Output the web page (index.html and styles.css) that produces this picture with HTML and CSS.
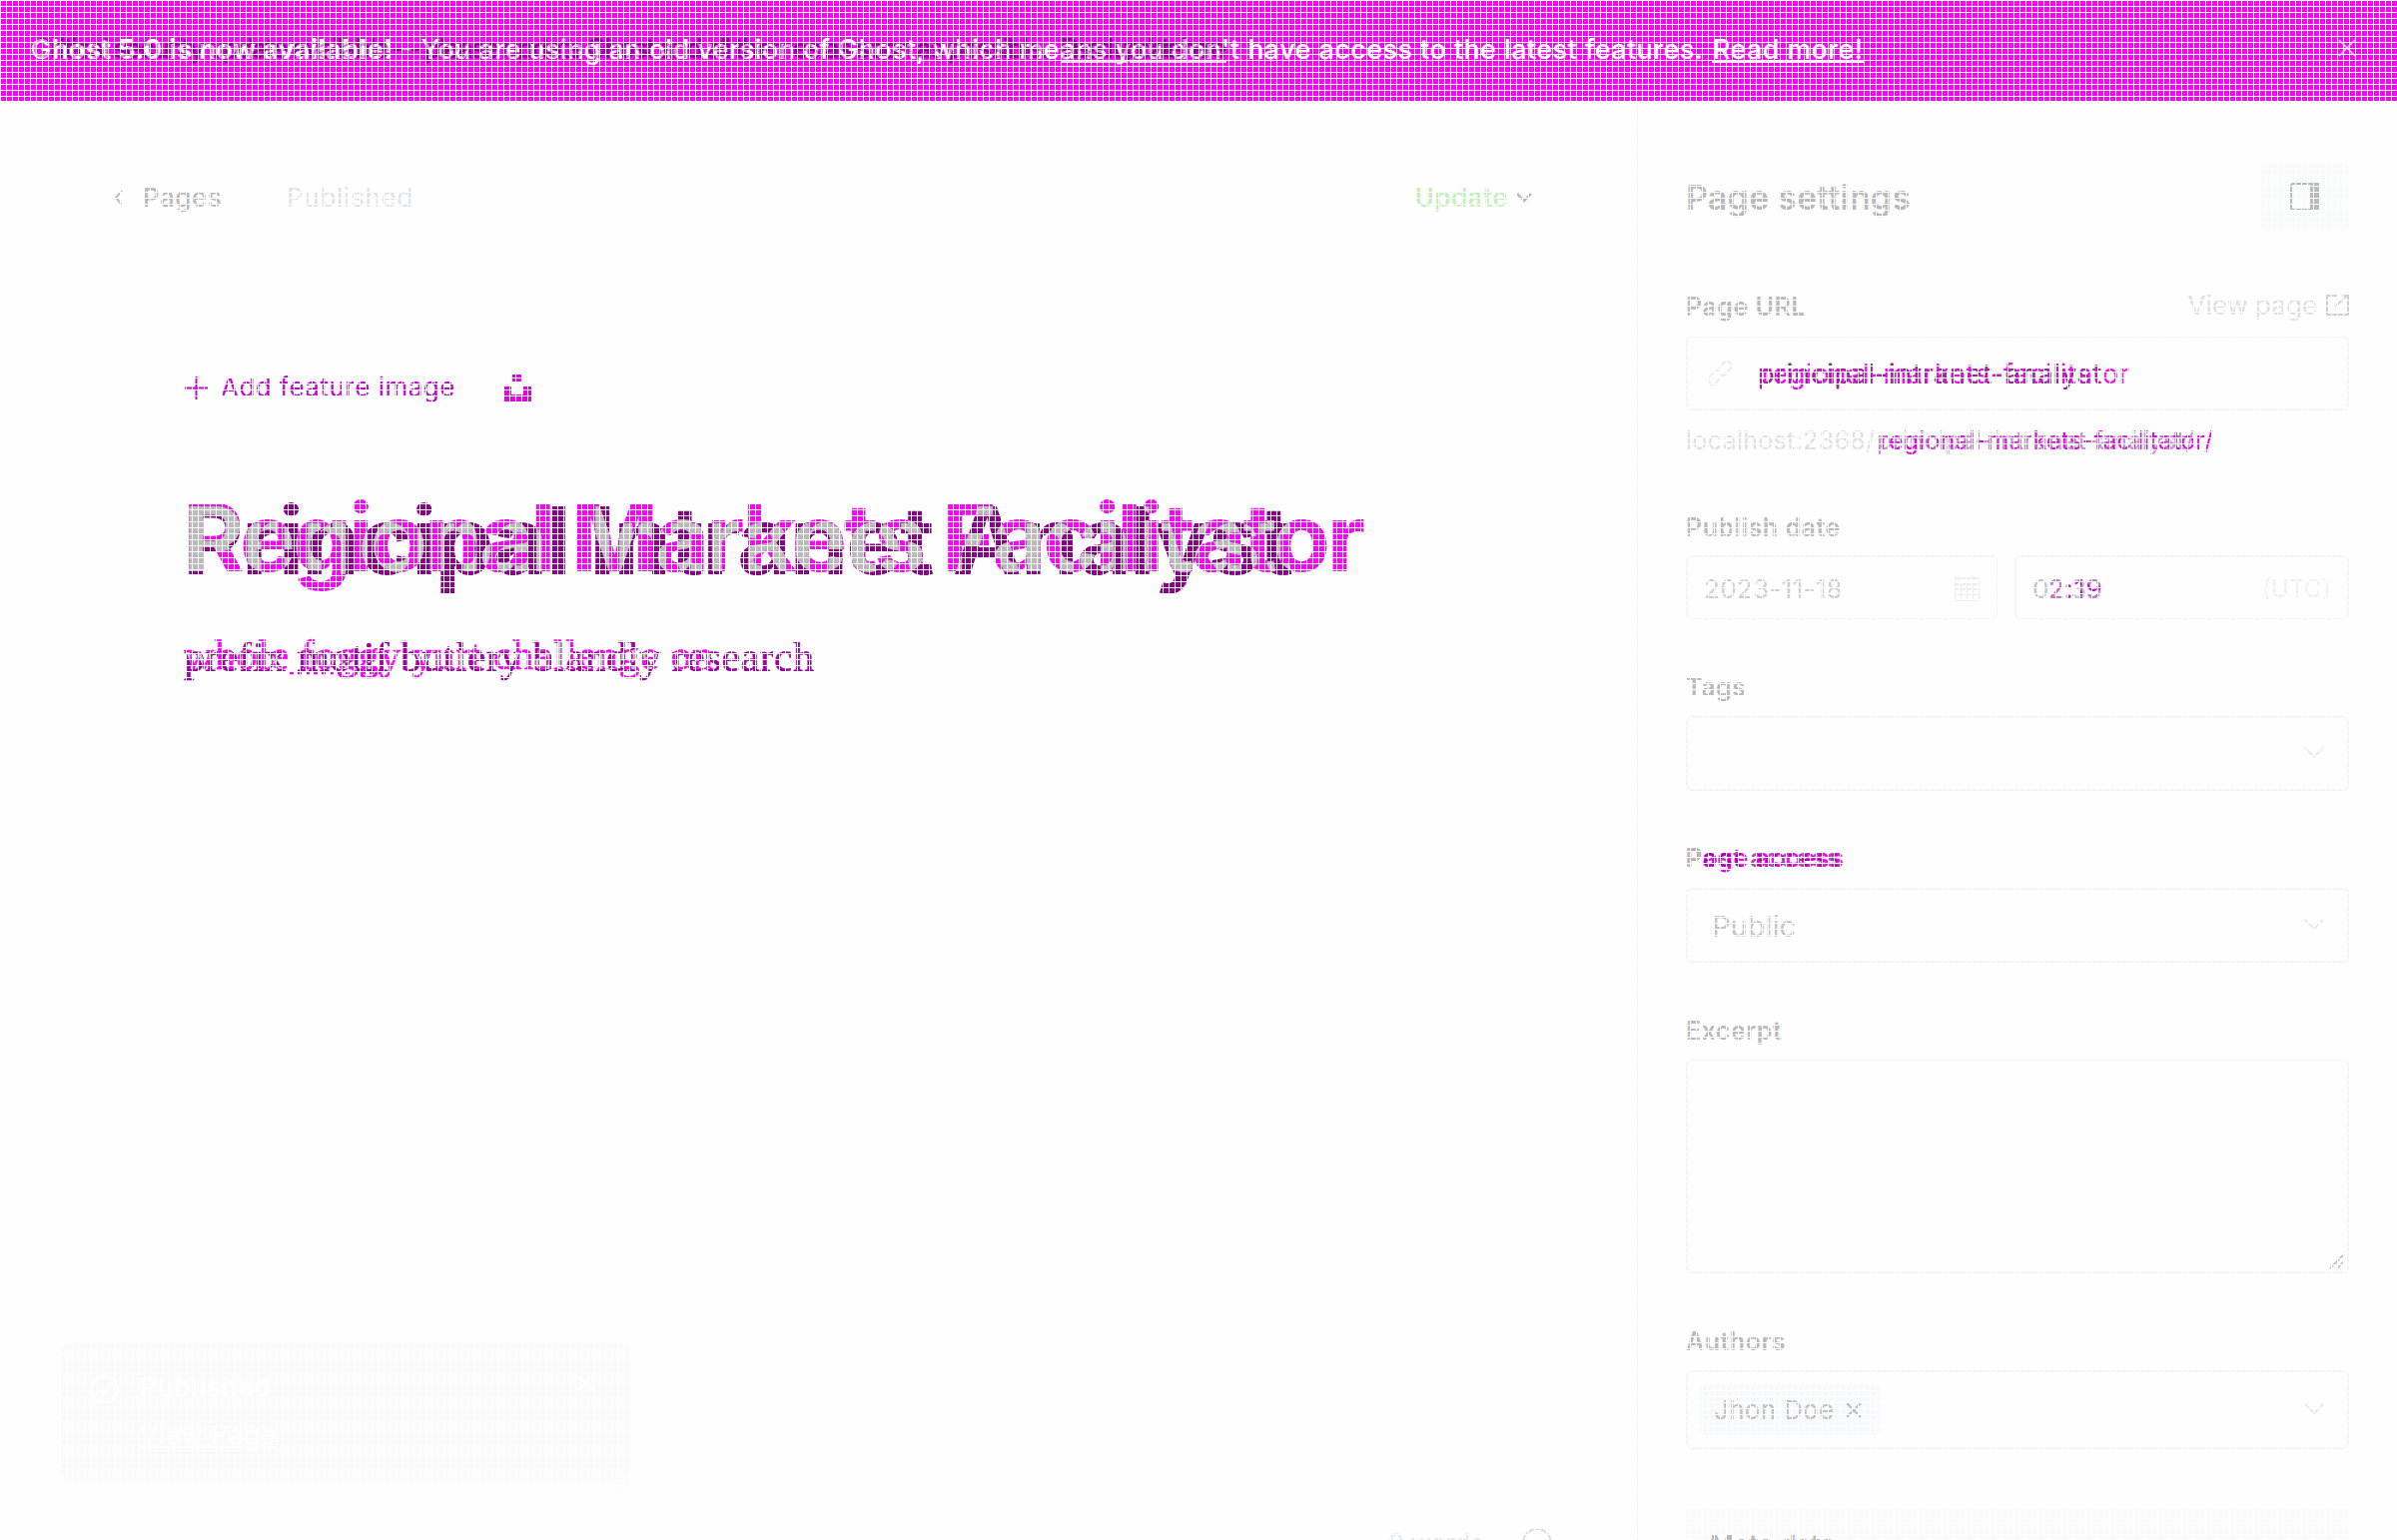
FILE: index.html
```html
<!DOCTYPE html>
<html lang="en">
<head>
<meta charset="utf-8">
<title>Page editor</title>
<link rel="stylesheet" href="styles.css">
</head>
<body>
<header class="banner">
  <svg class="banner-text" width="2200" height="101">
    <defs>
      <g id="b-old">
        <text x="32" y="58" textLength="1018">Critical security update available — please update Ghost and all themes as soon as possible.</text>
        <text x="1062" y="58" textLength="166">Read update here</text>
      </g>
    </defs>
    <use href="#b-old" class="dark"/>
    <rect x="1062" y="60" width="166" height="3" fill="#e2d4e2"/>
    <g class="light">
      <text x="31" y="59" textLength="362" font-weight="700">Ghost 5.0 is now available!</text>
      <text x="401" y="59" textLength="1304">- You are using an old version of Ghost, which means you don't have access to the latest features.</text>
      <text x="1715" y="59" textLength="150">Read more!</text>
    </g>
    <use href="#b-old" class="dark veil"/>
    <rect x="1714" y="61" width="152" height="2" fill="#fff"/>
  </svg>
  <svg class="banner-close" width="18" height="18" viewBox="0 0 18 18"><path d="M1 1L17 17M17 1L1 17"/></svg>
</header>
<div class="layout">
  <main class="editor">
    <div class="toolbar">
      <svg class="back" width="10" height="16" viewBox="0 0 10 16"><path d="M8 1L2 8L8 15"/></svg>
      <span class="crumb">Pages</span>
      <span class="status">Published</span>
      <span class="update">Update</span>
      <svg class="update-arrow" width="16" height="10" viewBox="0 0 16 10"><path d="M1 1L8 8L15 1"/></svg>
    </div>
    <div class="feature">
      <svg width="23" height="23" viewBox="0 0 23 23"><path d="M11.500 0V23M0 11.500H23" stroke="#c800d8" stroke-width="2"/></svg>
      <span class="feature-text">Add feature image</span>
      <svg width="27" height="27" viewBox="0 0 27 27"><path d="M8 0H18V7H8ZM0 12H7V20H19V12H27V27H0Z" fill="#e000e6"/></svg>
    </div>
    <svg class="title" width="1260" height="120">
      <defs>
        <text id="t-old" x="0" y="83" textLength="1112">Principal Intranet Analyst</text>
        <text id="t-new" x="0" y="80" textLength="1184">Regional Markets Facilitator</text>
        <clipPath id="t-clip"><use href="#t-new"/></clipPath>
      </defs>
      <use href="#t-old" fill="#8b008b"/>
      <use href="#t-new" fill="#f0f"/>
      <g clip-path="url(#t-clip)"><use href="#t-old" fill="#bababa"/></g>
    </svg>
    <svg class="subtitle" width="700" height="64">
      <defs>
        <text id="s-old" x="0" y="42" textLength="631">prefix motif butlery blandly research</text>
        <text id="s-new" x="0" y="40" textLength="530">whole foggy yurt challenge on</text>
        <clipPath id="s-clip"><use href="#s-new"/></clipPath>
      </defs>
      <use href="#s-new" fill="#f0f" stroke="#f0f"/>
      <use href="#s-old" fill="#a000a4" stroke="#a000a4"/>
      <g clip-path="url(#s-clip)"><use href="#s-old" fill="#c8c8c8"/></g>
      <path d="M106 44H202" stroke="#f0f" stroke-width="2.500" stroke-dasharray="4 4"/>
    </svg>
    <div class="toast">
      <svg width="30" height="30" viewBox="0 0 30 30"><circle cx="15" cy="15" r="13"/><path d="M9 15L14 20L22 9"/></svg>
      <div class="toast-body"><strong>Published</strong><span>View Page</span></div>
      <svg width="18" height="18" viewBox="0 0 18 18"><path d="M2 2L16 16M16 2L2 16"/></svg>
    </div>
    <div class="footer">
      <span>0 words</span>
      <svg width="30" height="30" viewBox="0 0 30 30"><circle cx="15" cy="15" r="14"/></svg>
    </div>
  </main>
  <aside class="settings">
    <div class="settings-head">
      <h2>Page settings</h2>
      <div class="toggle"><svg width="30" height="28" viewBox="0 0 30 28"><rect x="1" y="1" width="28" height="26" rx="2" fill="none" stroke="#bababa" stroke-width="2"/><path d="M20 1H29V27H20Z" fill="#bababa"/></svg></div>
    </div>
    <div class="row url-label">
      <span class="label">Page URL</span>
      <span class="view">View page <svg width="23" height="21" viewBox="0 0 23 21"><path d="M12 1H1V20H22V1H16M9 12L21 1"/></svg></span>
    </div>
    <div class="box url-box">
      <svg class="link" width="26" height="27" viewBox="0 0 26 27"><path d="M12 9L17 3Q20 0 23 3Q26 6 23 10L18 15Q15 17 13 15M13 18L9 24Q6 27 3 24Q0 20 3 17L8 12Q11 10 13 12"/></svg>
      <svg class="slug" width="400" height="48">
        <text x="0" y="34" textLength="344" fill="#a000a4">principal-intranet-analyst</text>
        <text x="4" y="34" textLength="368" fill="#f0f">regional-markets-facilitator</text>
        <text x="0" y="34" textLength="344" fill="#8b408b" opacity=".6">principal-intranet-analyst</text>
      </svg>
    </div>
    <svg class="hint" width="664" height="32">
      <text x="0" y="26" textLength="189" fill="#dcdfe5">localhost:2368/</text>
      <text x="194" y="26" textLength="334" fill="#e800ec">regional-markets-facilitator/</text>
      <text x="191" y="26" textLength="318" fill="#b878c0" opacity=".8">principal-intranet-analyst/</text>
    </svg>
    <div class="label date-label">Publish date</div>
    <div class="row">
      <div class="box date"><span>2023-11-18</span><svg width="26" height="26" viewBox="0 0 26 26"><path d="M1 3H25V25H1ZM1 9H25M1 14H25M1 19H25M7 9V25M13 9V25M19 9V25M6 0V5M20 0V5"/></svg></div>
      <div class="box time"><svg width="90" height="32"><text x="0" y="26" textLength="70" fill="#c4c7ca">02:33</text><text x="16" y="26" textLength="54" fill="#c800d0">2:19</text><text x="0" y="26" textLength="70" fill="#c4c7ca" opacity=".6">02:33</text></svg><span class="utc">(UTC)</span></div>
    </div>
    <div class="label group">Tags</div>
    <div class="box select"><svg class="chev" width="20" height="12" viewBox="0 0 20 12"><path d="M1 1L10 10L19 1"/></svg></div>
    <svg class="access group" width="300" height="32">
      <text x="0" y="25" textLength="158" fill="#f0f">Page access</text>
      <text x="0" y="25" textLength="154" fill="#8b008b" opacity=".7">Post access</text>
      <text x="0" y="25" fill="#bababa">P</text>
    </svg>
    <div class="box select"><span class="public">Public</span><svg class="chev" width="20" height="12" viewBox="0 0 20 12"><path d="M1 1L10 10L19 1"/></svg></div>
    <div class="label group">Excerpt</div>
    <div class="box area"><svg width="16" height="16" viewBox="0 0 16 16"><path d="M1 15L15 1M8 15L15 8" stroke="#c4c4c4" stroke-width="2"/></svg></div>
    <div class="label group">Authors</div>
    <div class="box authors">
      <span class="chip">Jhon Doe <svg width="16" height="16" viewBox="0 0 16 16"><path d="M1 1L15 15M15 1L1 15" stroke="#bababa" stroke-width="2"/></svg></span>
      <svg class="chev" width="20" height="12" viewBox="0 0 20 12"><path d="M1 1L10 10L19 1"/></svg>
    </div>
    <div class="meta">Meta data</div>
  </aside>
</div>
<div class="mesh"></div>
</body>
</html>
```
FILE: styles.css
```css
* { box-sizing: border-box; }
body {
  margin: 0;
  width: 2400px;
  height: 1542px;
  overflow: hidden;
  background: #fefefe;
  font-family: Inter, "Liberation Sans", sans-serif;
  font-size: 26px;
}
svg { display: block; flex: none; fill: none; }
/* fine white mesh drawn over the whole page */
.mesh {
  position: absolute;
  inset: 0;
  background:
    repeating-linear-gradient(90deg, #fefefe 0 1px, transparent 1px 6px),
    repeating-linear-gradient(180deg, #fefefe 0 1px, transparent 1px 6px);
}
.banner {
  height: 101px;
  display: flex;
  align-items: center;
  justify-content: space-between;
  padding-right: 41px;
  background: #f0f;
}
.banner-text { font-size: 27px; }
.banner-text .dark { fill: #96009a; font-weight: 500; }
.banner-text .veil { opacity: .45; }
.banner-text .light { fill: #fff; font-weight: 500; }
.banner-close { stroke: #ffc8ff; stroke-width: 1.5; margin-bottom: 5px; }
.layout { display: flex; height: 1441px; }
.editor { width: 1639px; display: flex; flex-direction: column; }
.toolbar {
  display: flex;
  align-items: center;
  height: 32px;
  margin: 81px 105px 0 114px;
  line-height: 32px;
}
.back { stroke: #bababa; stroke-width: 2; }
.crumb { margin-left: 19px; width: 144px; color: #bababa; font-weight: 500; letter-spacing: .5px; }
.status { color: #dfe1e7; letter-spacing: .7px; }
.update { margin-left: auto; color: #c3efb9; font-weight: 600; margin-right: 8px; letter-spacing: .4px; }
.update-arrow { stroke: #bababa; stroke-width: 2.5; }
.feature {
  display: flex;
  align-items: center;
  height: 32px;
  margin: 158px 0 0 185px;
  line-height: 32px;
  color: #c800d8;
}
.feature-text { width: 297px; padding-left: 13px; letter-spacing: .5px; }
.title { margin: 88px 0 0 183px; font-size: 94px; font-weight: 700; }
.subtitle { margin: 18px 0 0 184px; font-family: "Liberation Serif", serif; font-size: 42px; stroke-width: .6; }
.toast {
  display: flex;
  width: 571px;
  height: 138px;
  margin: 650px 0 0 60px;
  padding: 32px 36px 0 30px;
  border-radius: 12px;
  background: #fafafa;
  box-shadow: 0 12px 20px -4px #fcfcfc;
  color: #fff;
  line-height: 26px;
}
.toast svg { stroke: #fff; stroke-width: 2; }
.toast-body { display: flex; flex-direction: column; gap: 22px; width: 460px; padding-left: 20px; letter-spacing: .8px; }
.toast-body strong { font-weight: 600; }
.toast-body span { text-decoration: underline; }
.footer {
  display: flex;
  gap: 39px;
  margin: 48px 0 0 1390px;
  height: 12px;
  line-height: 30px;
  color: #e6e8ea;
  font-size: 25px;
}
.footer svg { stroke: #dcdcdc; stroke-width: 2; }
.settings {
  width: 761px;
  padding: 62px 48px 0 48px;
  border-left: 1px solid #f4f4f4;
}
.row { display: flex; justify-content: space-between; }
.settings-head { display: flex; justify-content: space-between; align-items: center; height: 68px; }
h2 { margin: 0; padding-top: 1px; color: #bababa; font-size: 34px; font-weight: 600; letter-spacing: .2px; }
.toggle {
  display: flex;
  align-items: center;
  justify-content: center;
  width: 88px;
  height: 68px;
  border-radius: 6px;
  background: #f8fbfa;
}
.label { height: 32px; margin-bottom: 14px; line-height: 34px; color: #bababa; font-weight: 600; font-size: 25px; letter-spacing: .5px; }
.group { margin-top: 51px; }
.url-label { margin-top: 59px; }
.view { display: flex; align-items: center; gap: 9px; height: 30px; color: #dcdfe5; }
.view svg { stroke: #d0d2d5; stroke-width: 2; }
.box {
  display: flex;
  align-items: center;
  height: 75px;
  border: 2px solid #f4f4f4;
  border-radius: 6px;
}
.url-box { padding-left: 19px; }
.link { stroke: #ececec; stroke-width: 2; }
.slug { margin-left: 25px; font-size: 27px; }
.hint { margin-top: 13px; font-size: 25px; }
.date-label { margin-top: 55px; margin-bottom: 13px; }
.date, .time { height: 64px; padding: 2px 16px 0; justify-content: space-between; color: #cdcfd2; letter-spacing: .3px; }
.date { width: 312px; }
.date svg { stroke: #e8e8e8; stroke-width: 1.5; }
.time { width: 335px; }
.utc { color: #eee; font-size: 24px; }
.select { padding: 0 23px 0 24px; }
.chev { margin-left: auto; margin-bottom: 1px; stroke: #e8e8e8; stroke-width: 2; }
.access { font-size: 25px; font-weight: 600; margin-bottom: 14px; }
.public { padding-top: 2px; color: #c4c4c4; font-size: 29px; }
.area { height: 214px; align-items: flex-end; justify-content: flex-end; padding: 2px; }
.authors { height: 79px; padding: 0 23px 0 12px; }
.chip {
  display: flex;
  align-items: center;
  gap: 12px;
  width: 180px;
  height: 50px;
  padding-left: 14px;
  border-radius: 6px;
  background: #f7f8fa;
  color: #c0c0c0;
  letter-spacing: .3px;
}
.meta { height: 32px; margin-top: 60px; padding: 20px 24px 0; background: #fbfbfb; color: #bababa; font-weight: 600; overflow: hidden; }
```
